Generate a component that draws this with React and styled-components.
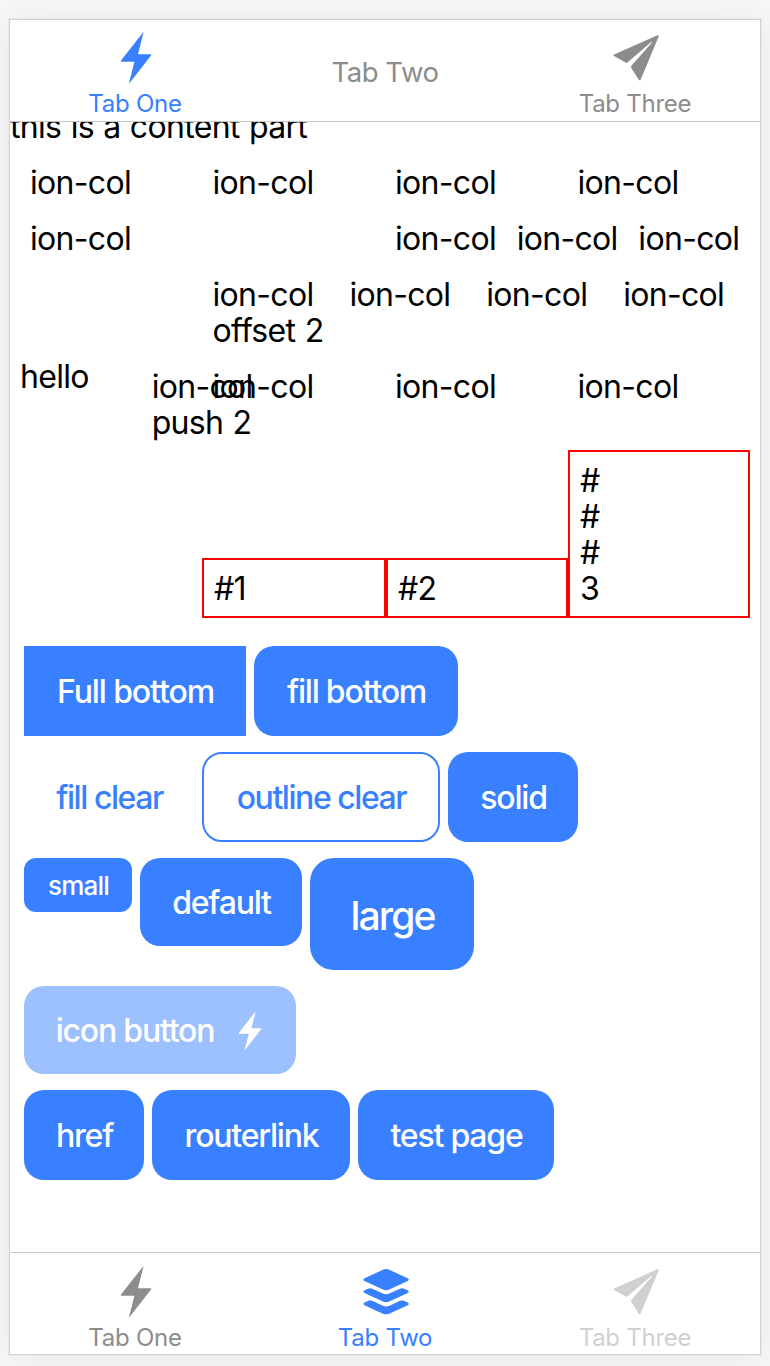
import React from "react";
import styled, { createGlobalStyle } from "styled-components";

const BLUE = "#3880ff";

const GlobalStyle = createGlobalStyle`
  *, *::before, *::after { box-sizing: border-box; }
  body {
    margin: 0;
    background: #f7f7f7;
    font-family: Inter, "Liberation Sans", sans-serif;
    color: #000;
  }
`;

const Page = styled.div`
  height: 1366px;
  padding: 19px 9px 11px;
  overflow: hidden;
`;

const Device = styled.div`
  display: flex;
  flex-direction: column;
  width: 752px;
  height: 1336px;
  border: 1px solid #d2d2d2;
  background: #fff;
  box-shadow: 0 0 0 1px #e9e9e9, 0 2px 36px rgba(0, 0, 0, 0.07);
`;

const TabBar = styled.nav`
  display: flex;
  flex: none;
  height: 102px;
  background: #fff;
  border-style: solid;
  border-color: #c8c8c8;
  border-width: ${(p) => (p.$edge === "top" ? "0 0 1px" : "1px 0 0")};
  padding-top: ${(p) => (p.$edge === "top" ? 0 : 1)}px;
`;

const Tab = styled.a`
  flex: 1;
  display: flex;
  flex-direction: column;
  align-items: center;
  justify-content: ${(p) => (p.$plain ? "center" : "flex-start")};
  padding-top: ${(p) => (p.$plain ? 2 : 8)}px;
  color: ${(p) => (p.$active ? BLUE : "#8c8c8c")};
  opacity: ${(p) => (p.$disabled ? 0.4 : 1)};
`;

const TabLabel = styled.span`
  font-size: ${(p) => (p.$large ? 27.5 : 24)}px;
  line-height: 32px;
  letter-spacing: ${(p) => (p.$large ? -0.45 : -0.25)}px;
  white-space: nowrap;
`;

const TabIcon = styled.svg`
  width: 60px;
  height: 60px;
  fill: currentColor;
`;

const Content = styled.main`
  flex: 1;
  min-height: 0;
  overflow: hidden;
  font-size: 32px;
  line-height: 36px;
  letter-spacing: -0.68px;
  word-spacing: 1px;
`;

const Intro = styled.div`
  margin-top: -14px;
  padding-top: 1px;
`;

const Grid = styled.section`
  padding: 9px 10px 10px;
`;

const Row = styled.div`
  position: relative;
  display: flex;
`;

const Col = styled.div`
  flex: ${(p) => (p.$size ? `0 0 ${(p.$size / 12) * 100}%` : "1 1 0")};
  min-width: 0;
  padding: 11px 10px 9px;
  margin-left: ${(p) => ((p.$offset || 0) / 12) * 100}%;
  white-space: ${(p) => (p.$nowrap ? "nowrap" : "normal")};
`;

const PushedCol = styled(Col)`
  position: relative;
  left: ${(2 / 12) * 100}%;
`;

const BoxRow = styled.div`
  display: grid;
  grid-template-columns: 184px 182px 182px;
  justify-content: end;
  align-items: end;
`;

const Box = styled.div`
  padding: 11px 10px 9px;
  border: 2px solid #f00;
`;

const Floating = styled.span`
  position: absolute;
  top: 1px;
  left: 0;
`;

const Buttons = styled.section`
  display: flex;
  flex-direction: column;
  gap: 16px;
  padding: 18px 14px 0;
`;

const ButtonRow = styled.div`
  display: flex;
  align-items: flex-start;
  gap: 8px;
`;

const sizes = {
  small: { height: 54, radius: 12, font: 26, spacing: -0.75 },
  default: { height: 88, radius: 20, font: 32, spacing: -1.2 },
  tall: { height: 90, radius: 20, font: 32, spacing: -1.2 },
  large: { height: 112, radius: 24, font: 39, spacing: -1.9 },
};

const Button = styled.button`
  display: flex;
  align-items: center;
  justify-content: center;
  gap: 21px;
  width: ${(p) => p.$width}px;
  height: ${(p) => sizes[p.$size || "tall"].height}px;
  padding: 2px 0 0 1px;
  border: ${(p) => (p.$fill === "outline" ? `2px solid ${BLUE}` : "0")};
  border-radius: ${(p) => (p.$square ? 0 : sizes[p.$size || "tall"].radius)}px;
  background: ${(p) => (p.$fill ? "transparent" : BLUE)};
  color: ${(p) => (p.$fill ? BLUE : "#fff")};
  opacity: ${(p) => (p.$faded ? 0.49 : 1)};
  font-family: inherit;
  font-size: ${(p) => sizes[p.$size || "tall"].font}px;
  font-weight: 500;
  line-height: 1;
  letter-spacing: ${(p) => p.$spacing || sizes[p.$size || "tall"].spacing}px;
  white-space: nowrap;
`;

const ButtonIcon = styled.svg`
  width: 30px;
  height: 44px;
  fill: currentColor;
`;

const BOLT = "M38.6 3.8 33 26.3H45.5Q46.8 26.3 46 27.4L23.8 56 29.4 33.7H16.7Q15.2 33.7 16.2 32.3Z";

const Flash = () => (
  <TabIcon viewBox="0 0 60 60"><path d={BOLT} /></TabIcon>
);

const Plane = () => (
  <TabIcon viewBox="0 0 60 60">
    <path d="M52.5 7.3 9 26.4Q7.7 27.2 9 28L20.6 34.5Q21.9 35 23 34.1L46 14.2Q47.5 13.3 46.8 14.8L26.4 37.8Q25.6 38.8 26.3 40L33.6 51.6Q34.8 53.3 35.7 51.4L53.7 8.6Q54.2 6.7 52.5 7.3Z" />
  </TabIcon>
);

const Layers = () => (
  <TabIcon viewBox="-0.6 0.1 60 60">
    <path d="M26.8 8.1Q30.5 6.1 34.2 8.1L52.1 16.3Q54.3 17.7 52.1 19.1L34.2 27.3Q30.5 29.2 26.8 27.3L8.9 19.1Q6.7 17.7 8.9 16.3Z" />
    <path id="layer" d="M8.9 28.4 13.2 26.6Q15 26.1 16.7 26.8L27.2 31.7Q30.5 33.2 33.8 31.7L44.3 26.8Q46 26.1 47.8 26.6L52.1 28.4Q54.3 29.8 52.1 31.2L34.2 39.4Q30.5 41.2 26.8 39.4L8.9 31.2Q6.7 29.8 8.9 28.4Z" />
    <use href="#layer" y="12.1" />
  </TabIcon>
);

export default function App() {
  return (
    <>
      <GlobalStyle />
      <Page>
        <Device>
          <TabBar $edge="top">
            <Tab $active><Flash /><TabLabel>Tab One</TabLabel></Tab>
            <Tab $plain><TabLabel $large>Tab Two</TabLabel></Tab>
            <Tab><Plane /><TabLabel>Tab Three</TabLabel></Tab>
          </TabBar>
          <Content>
            <Intro>this is a content part</Intro>
            <Grid>
              <Row>
                <Col>ion-col</Col>
                <Col>ion-col</Col>
                <Col>ion-col</Col>
                <Col>ion-col</Col>
              </Row>
              <Row>
                <Col $size={3}>ion-col</Col>
                <Col $offset={3} $nowrap>ion-col</Col>
                <Col $nowrap>ion-col</Col>
                <Col $nowrap>ion-col</Col>
              </Row>
              <Row>
                <Col $offset={3}>ion-col offset 2</Col>
                <Col>ion-col</Col>
                <Col>ion-col</Col>
                <Col>ion-col</Col>
              </Row>
              <Row>
                <Floating>hello</Floating>
                <PushedCol $size={3}>ion-col push 2</PushedCol>
                <Col>ion-col</Col>
                <Col>ion-col</Col>
                <Col>ion-col</Col>
              </Row>
              <BoxRow>
                <Box>#1</Box>
                <Box>#2</Box>
                <Box>#<br />#<br />#<br />3</Box>
              </BoxRow>
            </Grid>
            <Buttons>
              <ButtonRow>
                <Button $width={222} $square $spacing={-1.1}>Full bottom</Button>
                <Button $width={204}>fill bottom</Button>
              </ButtonRow>
              <ButtonRow>
                <Button $width={170} $fill="clear" $spacing={-1.45}>fill clear</Button>
                <Button $width={238} $fill="outline" $spacing={-1.45}>outline clear</Button>
                <Button $width={130}>solid</Button>
              </ButtonRow>
              <ButtonRow>
                <Button $width={108} $size="small">small</Button>
                <Button $width={162} $size="default">default</Button>
                <Button $width={164} $size="large">large</Button>
              </ButtonRow>
              <ButtonRow>
                <Button $width={272} $size="default" $faded>
                  icon button
                  <ButtonIcon viewBox="11 1 40 58"><path d={BOLT} /></ButtonIcon>
                </Button>
              </ButtonRow>
              <ButtonRow>
                <Button $width={120}>href</Button>
                <Button $width={198}>routerlink</Button>
                <Button $width={196}>test page</Button>
              </ButtonRow>
            </Buttons>
          </Content>
          <TabBar $edge="bottom">
            <Tab><Flash /><TabLabel>Tab One</TabLabel></Tab>
            <Tab $active><Layers /><TabLabel>Tab Two</TabLabel></Tab>
            <Tab $disabled><Plane /><TabLabel>Tab Three</TabLabel></Tab>
          </TabBar>
        </Device>
      </Page>
    </>
  );
}
